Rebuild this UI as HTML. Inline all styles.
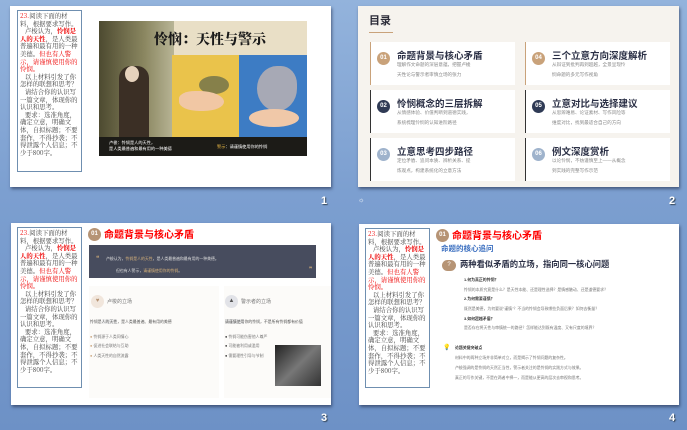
<!DOCTYPE html>
<html><head><meta charset="utf-8"><style>
*{margin:0;padding:0;box-sizing:border-box}
body{width:687px;height:430px;overflow:hidden;position:relative;background:linear-gradient(180deg,#93b3dc 0%,#7c9fd0 45%,#6d91c6 100%);font-family:"Liberation Sans","Noto Sans CJK SC",sans-serif}
.abs{position:absolute}
.slide{position:absolute;background:#fff;box-shadow:1px 2px 3px rgba(30,40,70,.6);overflow:hidden}
.num{position:absolute;color:#fff;font-weight:bold;font-size:11px;text-shadow:1px 1px 1px #345}
.tb{position:absolute;border:1px solid #6f8fb0;padding:1px 2px;font-family:"Noto Serif CJK SC",serif;font-size:6.4px;line-height:7.6px;color:#444;white-space:normal;word-break:break-all;overflow:hidden}
.r{color:#e00}
.rb{color:#e00;font-weight:bold}
.card{position:absolute;background:#fff;border-left:1px solid #c9a27a}
.circ{position:absolute;border-radius:50%;color:#fff;font-size:6px;font-weight:bold;text-align:center;line-height:13px;width:13px;height:13px}
.ct{position:absolute;font-size:9.5px;font-weight:bold;color:#2a2f45;white-space:nowrap}
.cs{position:absolute;font-size:4.6px;line-height:9.5px;color:#888;white-space:nowrap}
.sm{position:absolute;font-size:3.9px;color:#777;white-space:nowrap}
</style></head><body>

<!-- Slide 1 -->
<div class="slide" style="left:10px;top:6px;width:321px;height:181px">
  <div class="tb" style="left:7px;top:4px;width:65px;height:162px"><span class="r">23.</span>阅读下面的材料，根据要求写作。<br>&nbsp;&nbsp;&nbsp;卢梭认为，<span class="rb">怜悯是人的天性</span>，是人类最普遍和最有用的一种美德。<span class="r">但也有人警示，请谨慎使用你的怜悯。</span><br>&nbsp;&nbsp;&nbsp;以上材料引发了你怎样的联想和思考？<br>&nbsp;&nbsp;&nbsp;请结合你的认识写一篇文章，体现你的认识和思考。<br>&nbsp;&nbsp;&nbsp;要求：选准角度，确定立意，明确文体，自拟标题；不要套作，不得抄袭；不得泄露个人信息；不少于800字。</div>
  <div class="abs" style="left:89px;top:15px;width:208px;height:135px;background:#e9dfc6;overflow:hidden">
    <div class="abs" style="left:0;top:0;width:75px;height:135px;background:linear-gradient(90deg,#4d4a30,#8a8660 60%,#b8b596)"></div>
    <div class="abs" style="left:20px;top:45px;width:30px;height:75px;background:#3b2f25;border-radius:12px 12px 0 0"></div>
    <div class="abs" style="left:26px;top:45px;width:14px;height:16px;background:#e6d2bc;border-radius:50%"></div>
    <div class="abs" style="left:73px;top:34px;width:67px;height:82px;background:#eac34b"></div>
    <div class="abs" style="left:140px;top:34px;width:68px;height:82px;background:#3d7cc4"></div>
    <div class="abs" style="left:100px;top:55px;width:30px;height:18px;background:#86804a;border-radius:50%"></div>
    <div class="abs" style="left:80px;top:70px;width:45px;height:20px;background:#f1c7a4;border-radius:40% 60% 50% 50%"></div>
    <div class="abs" style="left:158px;top:45px;width:40px;height:45px;background:#a7a9b5;border-radius:50% 40% 50% 50%"></div>
    <div class="abs" style="left:150px;top:88px;width:50px;height:18px;background:#f0c8a8;border-radius:50%"></div>
    <div class="abs" style="left:55px;top:8px;font-family:'Noto Serif CJK SC',serif;font-weight:900;font-size:14px;color:#1a1a1a;white-space:nowrap">怜悯：天性与警示</div>
    <div class="abs" style="left:0;top:116px;width:208px;height:19px;background:#1c1b17"></div>
    <div class="abs" style="left:10px;top:119px;font-size:4.2px;line-height:6px;color:#fff;white-space:nowrap">卢梭：怜悯是人的天性，<br>是人类最普遍和最有用的一种美德</div>
    <div class="abs" style="left:118px;top:123px;font-size:4.2px;color:#fff;white-space:nowrap"><span style="color:#e4b545">警示</span>：请谨慎使用你的怜悯</div>
  </div>
</div>
<div class="num" style="left:321px;top:195px">1</div>

<!-- Slide 2 -->
<div class="slide" style="left:358px;top:6px;width:321px;height:181px;background:#f6f3ee">
  <div class="abs" style="left:11px;top:6px;font-size:11px;font-weight:bold;color:#2b2b38">目录</div>
  <div class="abs" style="left:11px;top:26px;width:24px;height:1px;background:#c9a27a"></div>
  <div class="card" style="left:12px;top:36px;width:145px;height:43px"></div>
  <div class="card" style="left:12px;top:84px;width:145px;height:43px;border-left-color:#333"></div>
  <div class="card" style="left:12px;top:132px;width:145px;height:43px;border-left-color:#333"></div>
  <div class="card" style="left:167px;top:36px;width:145px;height:43px"></div>
  <div class="card" style="left:167px;top:84px;width:145px;height:43px;border-left-color:#333"></div>
  <div class="card" style="left:167px;top:132px;width:145px;height:43px;border-left-color:#333"></div>

  <div class="circ" style="left:19px;top:46px;background:#c9a27a">01</div>
  <div class="ct" style="left:39px;top:42px">命题背景与核心矛盾</div>
  <div class="cs" style="left:39px;top:54px">理解作文命题的深层意蕴，把握卢梭<br>天性论与警示者审慎立场的张力</div>
  <div class="circ" style="left:19px;top:94px;background:#2f3a55">02</div>
  <div class="ct" style="left:39px;top:90px">怜悯概念的三层拆解</div>
  <div class="cs" style="left:39px;top:102px">从情感体验、价值判断到道德实践，<br>系统梳理怜悯的认知进阶路径</div>
  <div class="circ" style="left:19px;top:142px;background:#9fb3cc">03</div>
  <div class="ct" style="left:39px;top:138px">立意思考四步路径</div>
  <div class="cs" style="left:39px;top:150px">定位矛盾、追问本质、辨析关系、提<br>炼观点，构建系统化的立意方法</div>

  <div class="circ" style="left:174px;top:46px;background:#c9a27a">04</div>
  <div class="ct" style="left:194px;top:42px">三个立意方向深度解析</div>
  <div class="cs" style="left:194px;top:54px">从辩证到批判再到超越，全景呈现怜<br>悯命题的多元写作视角</div>
  <div class="circ" style="left:174px;top:94px;background:#2f3a55">05</div>
  <div class="ct" style="left:194px;top:90px">立意对比与选择建议</div>
  <div class="cs" style="left:194px;top:102px">从思辨难易、论证素材、写作风险等<br>维度对比，找到最适合自己的方向</div>
  <div class="circ" style="left:174px;top:142px;background:#9fb3cc">06</div>
  <div class="ct" style="left:194px;top:138px">例文深度赏析</div>
  <div class="cs" style="left:194px;top:150px">以论怜悯，不妨谨慎至上——从概念<br>到实践的完整写作示范</div>
</div>
<div class="abs" style="left:358px;top:197px;font-size:7px;color:#fff">☼</div>
<div class="num" style="left:669px;top:195px">2</div>

<!-- Slide 3 -->
<div class="slide" style="left:11px;top:223px;width:320px;height:182px">
  <div class="tb" style="left:6px;top:4px;width:65px;height:161px"><span class="r">23.</span>阅读下面的材料，根据要求写作。<br>&nbsp;&nbsp;&nbsp;卢梭认为，<span class="rb">怜悯是人的天性</span>，是人类最普遍和最有用的一种美德。<span class="r">但也有人警示，请谨慎使用你的怜悯。</span><br>&nbsp;&nbsp;&nbsp;以上材料引发了你怎样的联想和思考？<br>&nbsp;&nbsp;&nbsp;请结合你的认识写一篇文章，体现你的认识和思考。<br>&nbsp;&nbsp;&nbsp;要求：选准角度，确定立意，明确文体，自拟标题；不要套作，不得抄袭；不得泄露个人信息；不少于800字。</div>
  <div class="circ" style="left:77px;top:5px;background:#b69475">01</div>
  <div class="abs" style="left:93px;top:3px;font-size:10px;font-weight:bold;color:#f00;white-space:nowrap">命题背景与核心矛盾</div>
  <div class="abs" style="left:78px;top:22px;width:227px;height:33px;background:#474c5e"></div>
  <div class="sm" style="left:95px;top:33px;color:#ddd">卢梭认为，<span style="color:#d6b17a">怜悯是人的天性</span>，是人类最普遍和最有用的一种美德。</div>
  <div class="sm" style="left:105px;top:45px;color:#ddd">但也有人警示，<span style="color:#d6b17a">请谨慎使用你的怜悯</span>。</div>
  <div class="abs" style="left:85px;top:32px;font-size:6px;color:#d6b17a">❝</div>
  <div class="abs" style="left:298px;top:43px;font-size:6px;color:#d6b17a">❞</div>
  <div class="abs" style="left:78px;top:63px;width:130px;height:112px;background:#fcfbf9"></div>
  <div class="abs" style="left:213px;top:63px;width:107px;height:112px;background:#fcfbf9"></div>
  <div class="circ" style="left:80px;top:72px;background:#f1e6dc;color:#b69475">♥</div>
  <div class="abs" style="left:96px;top:75px;font-size:5px;color:#777">卢梭的立场</div>
  <div class="circ" style="left:214px;top:72px;background:#e2e3e8;color:#555">▲</div>
  <div class="abs" style="left:230px;top:75px;font-size:5px;color:#777">警示者的立场</div>
  <div class="sm" style="left:79px;top:96px;color:#555">怜悯是<span style="background:#eee">人的天性</span>，是人类最普遍、最有用的美德</div>
  <div class="sm" style="left:214px;top:96px;color:#555"><span style="background:#eee">请谨慎使用</span>你的怜悯，不是所有怜悯都有价值</div>
  <div class="sm" style="left:79px;top:111px"><span style="color:#c9a27a">●</span> 怜悯源于人类同情心</div>
  <div class="sm" style="left:79px;top:120px"><span style="color:#c9a27a">●</span> 促进社会联结与互助</div>
  <div class="sm" style="left:79px;top:130px"><span style="color:#c9a27a">●</span> 人类天性的自然流露</div>
  <div class="sm" style="left:214px;top:111px"><span style="color:#333">●</span> 怜悯可能伤害他人尊严</div>
  <div class="sm" style="left:214px;top:120px"><span style="color:#333">●</span> 可能被利用或滥用</div>
  <div class="sm" style="left:214px;top:130px"><span style="color:#333">●</span> 需要理性引导与节制</div>
  <div class="abs" style="left:264px;top:122px;width:46px;height:41px;background:linear-gradient(135deg,#222,#777 50%,#333)"></div>
</div>
<div class="num" style="left:321px;top:412px">3</div>

<!-- Slide 4 -->
<div class="slide" style="left:359px;top:224px;width:320px;height:181px">
  <div class="tb" style="left:6px;top:4px;width:65px;height:160px"><span class="r">23.</span>阅读下面的材料，根据要求写作。<br>&nbsp;&nbsp;&nbsp;卢梭认为，<span class="rb">怜悯是人的天性</span>，是人类最普遍和最有用的一种美德。<span class="r">但也有人警示，请谨慎使用你的怜悯。</span><br>&nbsp;&nbsp;&nbsp;以上材料引发了你怎样的联想和思考？<br>&nbsp;&nbsp;&nbsp;请结合你的认识写一篇文章，体现你的认识和思考。<br>&nbsp;&nbsp;&nbsp;要求：选准角度，确定立意，明确文体，自拟标题；不要套作，不得抄袭；不得泄露个人信息；不少于800字。</div>
  <div class="circ" style="left:77px;top:5px;background:#b69475">01</div>
  <div class="abs" style="left:93px;top:3px;font-size:10px;font-weight:bold;color:#f00;white-space:nowrap">命题背景与核心矛盾</div>
  <div class="abs" style="left:82px;top:19px;font-size:7.5px;font-weight:bold;color:#3b6fc0;white-space:nowrap">命题的核心追问</div>
  <div class="abs" style="left:83px;top:36px;width:14px;height:11px;border-radius:6px;background:#b69475;color:#fff;font-size:6px;text-align:center;line-height:11px">?</div>
  <div class="abs" style="left:101px;top:34px;font-size:8.3px;font-weight:bold;color:#2a2f45;white-space:nowrap">两种看似矛盾的立场，指向同一核心问题</div>
  <div class="sm" style="left:105px;top:53px;color:#333;font-weight:bold">1.何为真正的怜悯？</div>
  <div class="sm" style="left:105px;top:63px">怜悯的本质究竟是什么？是天性本能、还是理性选择？是情感触动、还是道德要求？</div>
  <div class="sm" style="left:105px;top:72px;color:#333;font-weight:bold">2.为何需要谨慎？</div>
  <div class="sm" style="left:105px;top:82px">既然是美德，为何要说"谨慎"？不当的怜悯会导致哪些负面后果？如何去衡量？</div>
  <div class="sm" style="left:105px;top:92px;color:#333;font-weight:bold">3.如何超越矛盾？</div>
  <div class="sm" style="left:105px;top:101px">是否存在将天性与审慎统一的路径？怎样能达到既有温度、又有尺度的境界？</div>
  <div class="abs" style="left:84px;top:120px;font-size:6px;color:#c9a27a">💡</div>
  <div class="sm" style="left:96px;top:121px;color:#333;font-weight:bold">论题关键突破点</div>
  <div class="sm" style="left:96px;top:131px">材料中的两种立场并非简单对立，而是揭示了怜悯问题的复杂性。</div>
  <div class="sm" style="left:96px;top:141px">卢梭强调的是怜悯的天然正当性，警示者关注的是怜悯的实践方式与效果。</div>
  <div class="sm" style="left:96px;top:151px">真正的写作关键，不是在两者中择一，而是能从更高的层次去审视和思考。</div>
</div>
<div class="num" style="left:669px;top:412px">4</div>
</body></html>
